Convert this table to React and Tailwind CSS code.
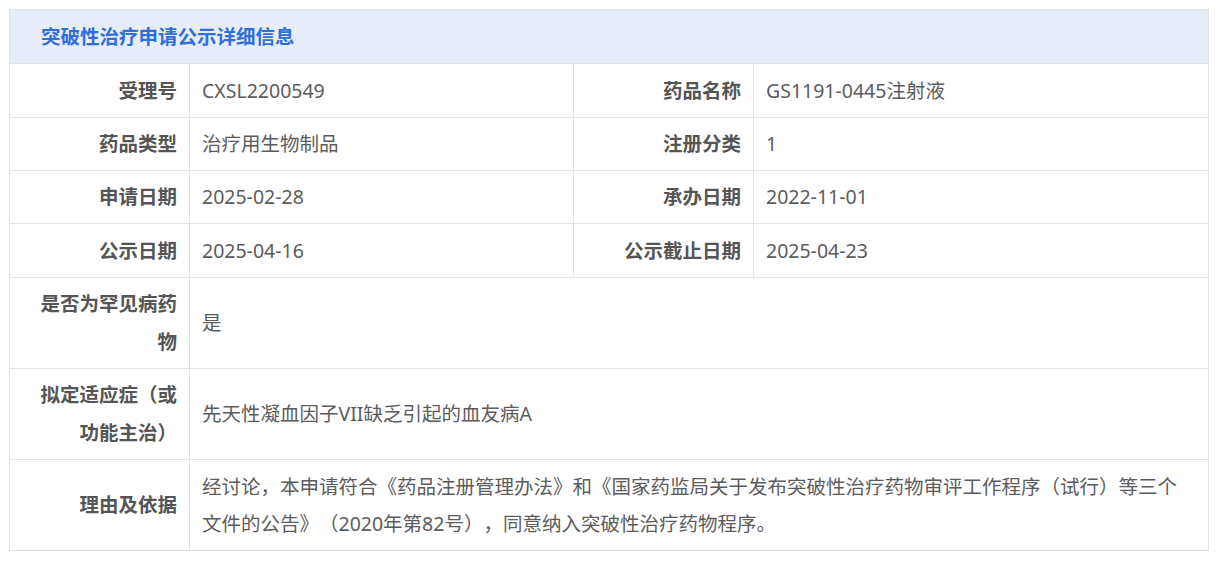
import React from "react";

const L = ({ children, className = "" }) => (
  <div className={"flex items-center justify-end text-right pl-4 pr-3 py-[7.3px] border-r border-b border-[#e3e3e3] font-bold text-[#555] " + className}>
    <div>{children}</div>
  </div>
);
const V = ({ children, className = "" }) => (
  <div className={"flex items-center px-3 py-[7.3px] border-r border-b border-[#e3e3e3] text-[#5c5c5c] " + className}>
    <div>{children}</div>
  </div>
);

export default function App() {
  return (
    <div className="bg-white p-[9px] min-h-[562px] [text-spacing-trim:space-all]" style={{ fontFamily: '"Noto Sans", "Noto Sans CJK SC", sans-serif' }}>
      <div className="w-[1200px] border-l border-t border-[#e3e3e3] text-[19.5px] leading-[37.8px]">
        <div className="h-[54.3px] flex items-center pl-[31px] bg-[#e6ecf8] border-r border-b border-[#e3e3e3] text-[#2f6fd9] font-bold">
          突破性治疗申请公示详细信息
        </div>
        <div className="grid grid-cols-[180px_384px_180px_1fr]">
          <L>受理号</L>
          <V>CXSL2200549</V>
          <L>药品名称</L>
          <V>GS1191-0445注射液</V>

          <L>药品类型</L>
          <V>治疗用生物制品</V>
          <L>注册分类</L>
          <V>1</V>

          <L>申请日期</L>
          <V>2025-02-28</V>
          <L>承办日期</L>
          <V>2022-11-01</V>

          <L>公示日期</L>
          <V>2025-04-16</V>
          <L>公示截止日期</L>
          <V>2025-04-23</V>

          <L>是否为罕见病药物</L>
          <V className="col-span-3">是</V>

          <L>拟定适应症（或功能主治）</L>
          <V className="col-span-3">先天性凝血因子VII缺乏引起的血友病A</V>

          <L>理由及依据</L>
          <V className="col-span-3">
            经讨论，本申请符合《药品注册管理办法》和《国家药监局关于发布突破性治疗药物审评工作程序（试行）等三个文件的公告》（2020年第82号），同意纳入突破性治疗药物程序。
          </V>
        </div>
      </div>
    </div>
  );
}
